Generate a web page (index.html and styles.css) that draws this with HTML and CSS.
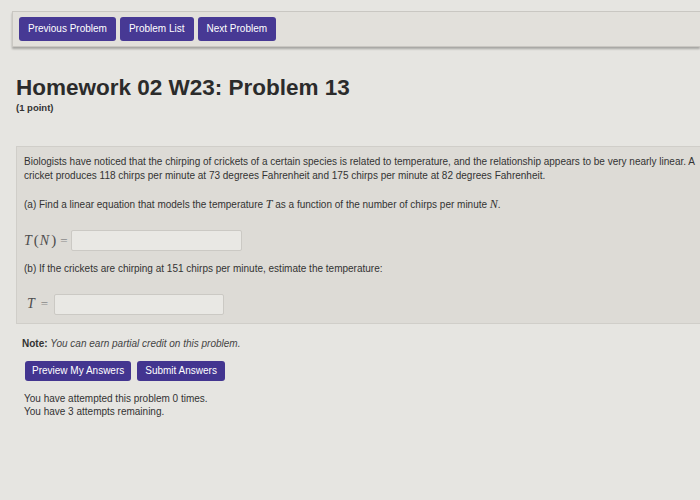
FILE: index.html
```html
<!DOCTYPE html>
<html lang="en">
<head>
<meta charset="utf-8">
<title>Homework 02 W23: Problem 13</title>
<link rel="stylesheet" href="styles.css">
</head>
<body>
<nav class="nav">
  <a class="btn nav-btn">Previous Problem</a>
  <a class="btn nav-btn">Problem List</a>
  <a class="btn nav-btn">Next Problem</a>
</nav>

<h1 class="title">Homework 02 W23: Problem 13</h1>
<div class="points">(1 point)</div>

<div class="problem">
  <p class="text">Biologists have noticed that the chirping of crickets of a certain species is related to temperature, and the relationship appears to be very nearly linear. A cricket produces 118 chirps per minute at 73 degrees Fahrenheit and 175 chirps per minute at 82 degrees Fahrenheit.</p>
  <p class="text">(a) Find a linear equation that models the temperature <span class="mi">T</span> as a function of the number of chirps per minute <span class="mi">N</span>.</p>
  <div class="answer-row">
    <span class="math"><span class="mi">T</span><span class="mo">(</span><span class="mi">N</span><span class="mo">)</span><span class="eq">=</span></span>
    <span class="input input-a"></span>
  </div>
  <p class="text">(b) If the crickets are chirping at 151 chirps per minute, estimate the temperature:</p>
  <div class="answer-row last">
    <span class="math math-b"><span class="mi">T</span><span class="eq">=</span></span>
    <span class="input input-b"></span>
  </div>
</div>

<p class="note"><b>Note:</b> <i>You can earn partial credit on this problem.</i></p>

<div class="actions">
  <a class="btn act-btn">Preview My Answers</a>
  <a class="btn act-btn">Submit Answers</a>
</div>

<div class="attempts">
  <div>You have attempted this problem 0 times.</div>
  <div>You have 3 attempts remaining.</div>
</div>
</body>
</html>
```

FILE: styles.css
```css
html, body {
  overflow: hidden;
}

body {
  margin: 0;
  background: #e6e5e1;
  font-family: "Liberation Sans", Arial, sans-serif;
  color: #333;
}

.nav {
  margin: 11px 0 0 12px;
  padding: 5px 6px;
  border: 1px solid #c9c7c2;
  border-right: none;
  background: #e2e0db;
  box-shadow: 0 2px 2px rgba(0, 0, 0, 0.28);
  display: flex;
  gap: 4px;
}

.btn {
  display: block;
  background: #473994;
  color: #fff;
  border-radius: 3px;
  font-size: 10px;
  white-space: nowrap;
}

.nav-btn {
  height: 24px;
  line-height: 24px;
  padding: 0 9px;
}

.title {
  margin: 28px 0 0 16px;
  font-size: 22.5px;
  line-height: 26px;
  font-weight: bold;
  color: #2b2b2b;
}

.points {
  margin-left: 16px;
  font-size: 9.5px;
  line-height: 13px;
  font-weight: bold;
  color: #333;
}

.problem {
  margin: 32px 0 0 16px;
  width: 690px;
  padding: 8px 7px 8px 7px;
  border: 1px solid #d0cec9;
  background: #dddbd6;
}

.text {
  margin: 0 0 14px;
  font-size: 10px;
  line-height: 14px;
  color: #333;
}

.mi {
  font-family: "Liberation Serif", "Times New Roman", serif;
  font-style: italic;
  font-size: 12px;
}

.answer-row {
  display: flex;
  align-items: center;
  height: 21px;
  margin: 18px 0 10.5px;
}

.answer-row.last {
  margin-bottom: 0;
}

.math {
  display: flex;
  align-items: baseline;
  font-family: "Liberation Serif", "Times New Roman", serif;
  font-size: 14px;
  color: #4d4d4d;
  padding-left: 0;
}

.math-b {
  padding-left: 3px;
}

.math .mi {
  font-size: 14px;
  letter-spacing: 1px;
}

.math .mo {
  font-size: 15px;
  padding: 0 1px;
}

.eq {
  color: #8a8a8a;
  margin-left: 3px;
  font-size: 13px;
}

.math-b .eq {
  margin-left: 5px;
}

.input {
  display: block;
  height: 21px;
  box-sizing: border-box;
  border: 1px solid #cbc9c4;
  border-radius: 2px;
  background: #e9e8e4;
  margin-left: 4px;
}

.input-a {
  width: 171px;
}

.input-b {
  width: 170px;
  margin-left: 6px;
}

.note {
  margin: 13px 0 0 22px;
  font-size: 10px;
  line-height: 14px;
  color: #333;
}

.note i {
  color: #444;
}

.actions {
  display: flex;
  gap: 6px;
  margin: 10px 0 0 25px;
}

.act-btn {
  height: 20px;
  line-height: 20px;
  padding: 0 7px;
  background: #433590;
}

.act-btn + .act-btn {
  padding: 0 8px;
}

.attempts {
  margin: 11px 0 0 24px;
  font-size: 10px;
  line-height: 13.5px;
  color: #333;
}
```
